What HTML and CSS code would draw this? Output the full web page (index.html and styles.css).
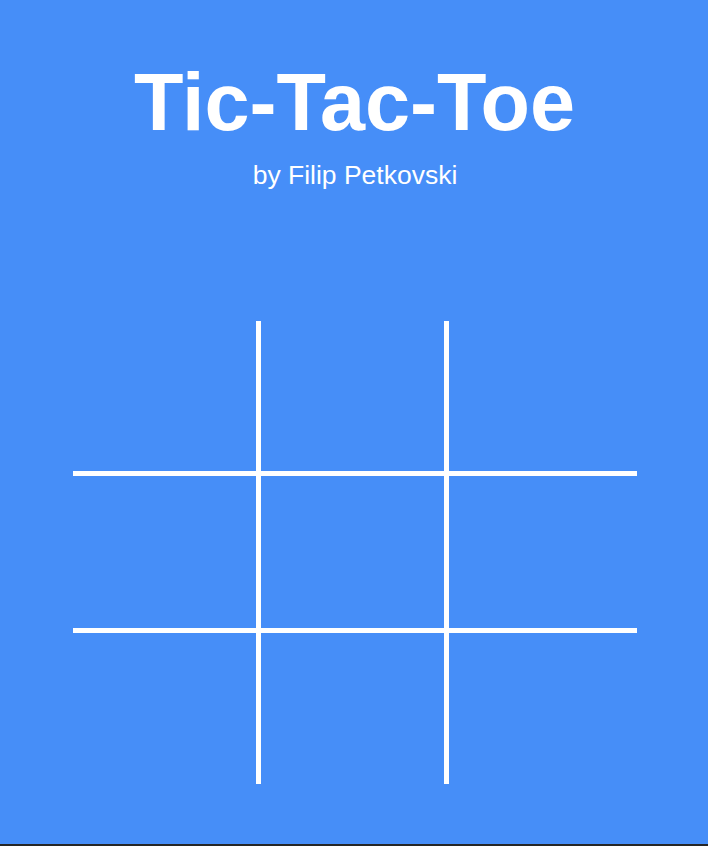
FILE: index.html
```html
<!DOCTYPE html>
<html lang="en">
<head>
<meta charset="utf-8">
<title>Tic-Tac-Toe</title>
<link rel="stylesheet" href="styles.css">
</head>
<body>
<main class="app">
  <header class="header">
    <h1 class="title">Tic-Tac-Toe</h1>
    <p class="author">by Filip Petkovski</p>
  </header>
  <section class="board">
    <div class="cell cell-r cell-b"></div>
    <div class="cell cell-r cell-b"></div>
    <div class="cell cell-b"></div>
    <div class="cell cell-r cell-b"></div>
    <div class="cell cell-r cell-b"></div>
    <div class="cell cell-b"></div>
    <div class="cell cell-r"></div>
    <div class="cell cell-r"></div>
    <div class="cell"></div>
  </section>
</main>
</body>
</html>
```
FILE: styles.css
```css
html {
  background: #262626;
}
body {
  margin: 0;
  font-family: "Liberation Sans", Arial, sans-serif;
}
.app {
  height: 844px;
  background: #468ef8;
  color: #ffffff;
  padding-top: 62px;
  box-sizing: border-box;
}
.header {
  text-align: center;
}
.title {
  margin: 0;
  font-size: 81px;
  line-height: 80px;
  font-weight: 700;
  padding-left: 1px;
}
.author {
  margin: 18px 0 0;
  font-size: 26.5px;
  line-height: 30px;
  padding-left: 2px;
}
.board {
  margin: 131px 0 0 73px;
  width: 564px;
  display: grid;
  grid-template-columns: 188px 188px 188px;
  grid-template-rows: 155px 157px 151px;
}
.cell {
  box-sizing: border-box;
}
.cell-r {
  border-right: 5px solid #ffffff;
}
.cell-b {
  border-bottom: 5px solid #ffffff;
}
```
